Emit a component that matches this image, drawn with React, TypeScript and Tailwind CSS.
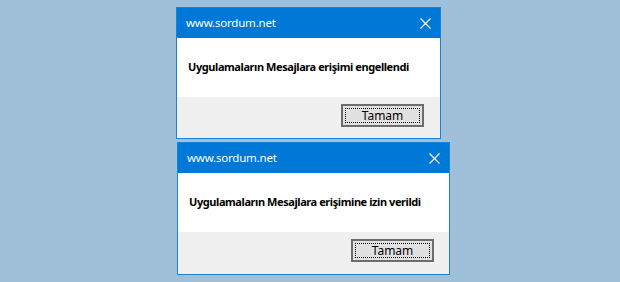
import React from "react";

function Dialog({ text, ml, w, h, btnMr }: { text: string; ml: string; w: string; h: string; btnMr: string }) {
  return (
    <div className={`${ml} ${w} ${h} border border-[#1883d7] flex flex-col bg-white`} style={{ fontFamily: '"Noto Sans", "Open Sans", sans-serif' }}>
      <div className="h-[30px] bg-[#0078d7] flex items-center justify-between pl-[9px] pr-[9px]">
        <span className="text-white text-[11.5px] tracking-[-0.2px] whitespace-nowrap">www.sordum.net</span>
        <svg width="11" height="11" viewBox="0 0 11 11">
          <path d="M0.5 0.5 L10.5 10.5 M10.5 0.5 L0.5 10.5" stroke="white" strokeWidth="1.1" />
        </svg>
      </div>
      <div className="h-[59px] bg-white flex items-center pl-[11px]">
        <span className="text-black text-[11px] font-bold tracking-[-0.42px] whitespace-nowrap">{text}</span>
      </div>
      <div className={`flex-1 bg-[#f0f0f0] flex items-start justify-end pt-[7px] ${btnMr}`}>
        <div className="w-[83px] h-[23px] border-2 border-[#6d6d6d] bg-[#e1e1e1] flex items-center justify-center">
          <div className="w-[75px] h-[15px] border border-dotted border-black flex items-center justify-center text-[12px] text-black">
            Tamam
          </div>
        </div>
      </div>
    </div>
  );
}

export default function App() {
  return (
    <div className="w-[620px] h-[282px] bg-[#a0bfd9] pt-[7px] flex flex-col gap-[3px] overflow-hidden">
      <Dialog text="Uygulamaların Mesajlara erişimi engellendi" ml="ml-[176px]" w="w-[265px]" h="h-[132px]" btnMr="pr-[16px]" />
      <Dialog text="Uygulamaların Mesajlara erişimine izin verildi" ml="ml-[177px]" w="w-[273px]" h="h-[133px]" btnMr="pr-[15px]" />
    </div>
  );
}
